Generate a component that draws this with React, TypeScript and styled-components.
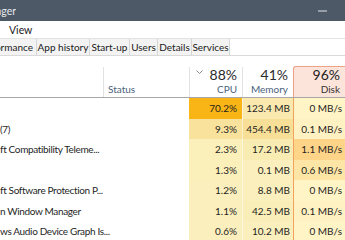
import React from "react";
import styled, { createGlobalStyle } from "styled-components";

const Global = createGlobalStyle`
  html, body { margin: 0; padding: 0; background: #fff; overflow: hidden; }
  body { font-family: "Lato", "Noto Sans", sans-serif; }
`;

const Viewport = styled.div`
  width: 345px;
  height: 240px;
  overflow: hidden;
`;

const Window = styled.div`
  width: 392px;
  height: 240px;
  display: flex;
  flex-direction: column;
  background: #fff;
`;

const TitleBar = styled.div`
  height: 21px;
  flex-shrink: 0;
  background: #4e5968;
  display: flex;
  align-items: center;
  color: #e4e7eb;
`;

const ClipRight = styled.div<{ $w: number }>`
  width: ${(p) => p.$w}px;
  flex-shrink: 0;
  display: flex;
  justify-content: flex-end;
  overflow: hidden;
  white-space: nowrap;
`;

const TitleText = styled.span`
  font-size: 10.5px;
`;

const Spacer = styled.div`
  flex: 1;
`;

const CtrlButton = styled.div`
  width: 46px;
  height: 21px;
  display: flex;
  align-items: center;
  justify-content: center;
  flex-shrink: 0;
`;

const MenuBar = styled.div`
  height: 17px;
  flex-shrink: 0;
  display: flex;
  align-items: center;
  padding-left: 9px;
  font-size: 10.5px;
  color: #1a1a1a;
  border-bottom: 1px solid #e3e3e3;
`;

const TabStrip = styled.div`
  height: 16px;
  flex-shrink: 0;
  display: flex;
  border-bottom: 1px solid #d9d9d9;
  background: #fff;
`;

const Tab = styled.div<{ $w: number; $end?: boolean }>`
  width: ${(p) => p.$w}px;
  flex-shrink: 0;
  box-sizing: border-box;
  display: flex;
  align-items: center;
  justify-content: ${(p) => (p.$end ? "flex-end" : "center")};
  padding-right: ${(p) => (p.$end ? "3px" : "0")};
  overflow: hidden;
  white-space: nowrap;
  font-size: 10px;
  color: #1a1a1a;
  background: #f3f3f3;
  border-right: 1px solid #d6d6d6;
`;

const Header = styled.div`
  height: 41px;
  flex-shrink: 0;
  display: flex;
  border-bottom: 1px solid #a8a8a8;
`;

const HeadCell = styled.div<{ $w: number; $active?: boolean; $first?: boolean }>`
  width: ${(p) => p.$w}px;
  flex-shrink: 0;
  box-sizing: border-box;
  margin-top: ${(p) => (p.$active ? "10px" : "11px")};
  display: flex;
  flex-direction: column;
  justify-content: space-between;
  border-left: 1px solid ${(p) => (p.$first ? "transparent" : p.$active ? "#f0a084" : "#e2e2e2")};
  border-top: ${(p) => (p.$active ? "1px solid #f0a084" : "none")};
  border-top-left-radius: ${(p) => (p.$active ? "3px" : "0")};
  background: ${(p) => (p.$active ? "#fde4da" : "#fff")};
  padding: 0 5px 1px 4px;
`;

const HeadTop = styled.div`
  display: flex;
  justify-content: space-between;
  align-items: flex-start;
`;

const Pct = styled.div<{ $active?: boolean }>`
  font-size: 14px;
  line-height: 15px;
  color: ${(p) => (p.$active ? "#222" : "#2b2b2b")};
  margin-left: auto;
`;

const Label = styled.div<{ $active?: boolean; $left?: boolean }>`
  font-size: 10px;
  line-height: 13px;
  color: ${(p) => (p.$active ? "#333" : "#4a5f7c")};
  text-align: ${(p) => (p.$left ? "left" : "right")};
`;

const Chevron = styled.svg`
  margin-top: 3px;
  margin-left: 2px;
`;

const Body = styled.div`
  display: flex;
  flex-direction: column;
`;

const Row = styled.div`
  height: 20.5px;
  display: flex;
  font-size: 10px;
  color: #1f1f1f;
`;

const NameCell = styled.div`
  width: 189px;
  flex-shrink: 0;
  display: flex;
  align-items: center;
  white-space: nowrap;
  overflow: hidden;
  letter-spacing: -0.35px;
`;

const Cell = styled.div<{ $w: number; $bg: string; $edge?: string; $pad?: number }>`
  width: ${(p) => p.$w}px;
  flex-shrink: 0;
  box-sizing: border-box;
  background: ${(p) => p.$bg};
  border-left: 1px solid ${(p) => p.$edge ?? "rgba(255,255,255,0.5)"};
  display: flex;
  align-items: center;
  justify-content: flex-end;
  padding-right: ${(p) => p.$pad ?? 5}px;
  white-space: nowrap;
`;

type R = {
  name: string;
  cpu: string;
  mem: string;
  disk: string;
  c: string;
  m: string;
  d: string;
};

const light = "#fbf0bd";
const rows: R[] = [
  { name: "", cpu: "70.2%", mem: "123.4 MB", disk: "0 MB/s", c: "#f9b416", m: "#f9e9ae", d: "#fff4c6" },
  { name: "(7)", cpu: "9.3%", mem: "454.4 MB", disk: "0.1 MB/s", c: "#f9e29c", m: "#f8df98", d: "#fff1c2" },
  { name: "ft Compatibility Teleme...", cpu: "2.3%", mem: "17.2 MB", disk: "1.1 MB/s", c: "#fbefba", m: "#f9ecb3", d: "#fdd488" },
  { name: "", cpu: "1.3%", mem: "0.1 MB", disk: "0.6 MB/s", c: "#fbefba", m: light, d: "#fde5a5" },
  { name: "ft Software Protection P...", cpu: "1.2%", mem: "8.8 MB", disk: "0 MB/s", c: light, m: light, d: "#fff4c6" },
  { name: "n Window Manager", cpu: "1.1%", mem: "42.5 MB", disk: "0.1 MB/s", c: light, m: "#faeeb8", d: "#fff1c2" },
  { name: "ws Audio Device Graph Is...", cpu: "0.6%", mem: "10.2 MB", disk: "0 MB/s", c: light, m: light, d: "#fff4c6" },
];

export default function App() {
  return (
    <Viewport>
      <Global />
      <Window>
        <TitleBar>
          <ClipRight $w={16}>
            <TitleText>Task Manager</TitleText>
          </ClipRight>
          <Spacer />
          <CtrlButton>
            <svg width="10" height="2" viewBox="0 0 10 2">
              <rect x="0" y="0.5" width="9" height="1" fill="#dfe3e8" />
            </svg>
          </CtrlButton>
          <CtrlButton>
            <svg width="10" height="10" viewBox="0 0 10 10">
              <rect x="0.5" y="0.5" width="9" height="9" fill="none" stroke="#dfe3e8" />
            </svg>
          </CtrlButton>
        </TitleBar>
        <MenuBar>View</MenuBar>
        <TabStrip>
          <Tab $w={37} $end>
            Performance
          </Tab>
          <Tab $w={53}>App history</Tab>
          <Tab $w={40}>Start-up</Tab>
          <Tab $w={28}>Users</Tab>
          <Tab $w={34}>Details</Tab>
          <Tab $w={38}>Services</Tab>
        </TabStrip>
        <Header>
          <HeadCell $w={103} $first />
          <HeadCell $w={86}>
            <span />
            <Label $left>Status</Label>
          </HeadCell>
          <HeadCell $w={53}>
            <HeadTop>
              <Chevron width="7" height="4" viewBox="0 0 7 4">
                <polyline points="0.5,0.5 3.5,3.5 6.5,0.5" fill="none" stroke="#8a8a8a" strokeWidth="1" />
              </Chevron>
              <Pct>88%</Pct>
            </HeadTop>
            <Label>CPU</Label>
          </HeadCell>
          <HeadCell $w={51}>
            <Pct>41%</Pct>
            <Label>Memory</Label>
          </HeadCell>
          <HeadCell $w={52} $active>
            <Pct $active>96%</Pct>
            <Label $active>Disk</Label>
          </HeadCell>
        </Header>
        <Body>
          {rows.map((r, i) => (
            <Row key={i}>
              <NameCell>{r.name}</NameCell>
              <Cell $w={53} $bg={r.c} $edge={r.c}>
                {r.cpu}
              </Cell>
              <Cell $w={51} $bg={r.m} $pad={3}>
                {r.mem}
              </Cell>
              <Cell $w={52} $bg={r.d} $edge="#f4a15e" $pad={3}>
                {r.disk}
              </Cell>
            </Row>
          ))}
        </Body>
      </Window>
    </Viewport>
  );
}
